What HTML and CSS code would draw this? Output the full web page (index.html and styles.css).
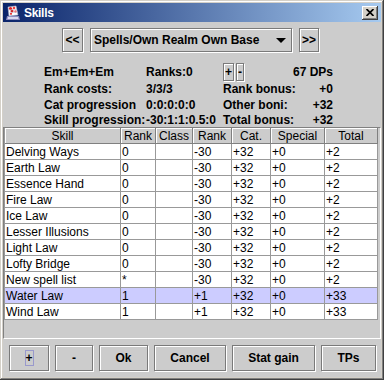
FILE: index.html
```html
<!DOCTYPE html>
<html>
<head>
<meta charset="utf-8">
<title>Skills</title>
<link rel="stylesheet" href="styles.css">
</head>
<body>
<div class="window">
  <div class="titlebar">
    <svg class="app-icon" width="16" height="16" viewBox="0 0 16 16">
      <path d="M2 11 L14 11 L15 15 L1 15 Z" fill="#8c8cc0"/>
      <path d="M3 12 L13 12 L13.5 14 L2.5 14 Z" fill="#d8d8f0"/>
      <path d="M3 2 L11 1 L13 10 L4 11 Z" fill="#ffffff" stroke="#b0b0c8" stroke-width="0.6"/>
      <circle cx="5.5" cy="3.5" r="1.6" fill="#e02020"/>
      <circle cx="9" cy="3" r="1.3" fill="#f04040"/>
      <circle cx="7" cy="6" r="1.5" fill="#d01818"/>
      <circle cx="10.5" cy="6.5" r="1.2" fill="#f06060"/>
      <circle cx="6" cy="8.8" r="1.1" fill="#e83030"/>
      <path d="M4 5 L12 4.5 M4.5 7.5 L12.5 7" stroke="#c0c0d8" stroke-width="0.6"/>
    </svg>
    <span class="title-text">Skills</span>
    <div class="close-btn">
      <svg width="8" height="7" viewBox="0 0 8 7"><path d="M0.5 0 L7.5 7 M7.5 0 L0.5 7" stroke="#000" stroke-width="1.7"/></svg>
    </div>
  </div>
  <div class="content">
    <div class="nav">
      <div class="btn nav-btn">&lt;&lt;</div>
      <div class="combo">
        <span>Spells/Own Realm Own Base</span>
        <svg width="10" height="5" viewBox="0 0 10 5"><path d="M0 0 L10 0 L5 5 Z" fill="#000"/></svg>
      </div>
      <div class="btn nav-btn nav-btn-r">&gt;&gt;</div>
    </div>
    <div class="info">
      <div class="cell">Em+Em+Em</div>
      <div class="cell">Ranks:0</div>
      <div class="cell span2">
        <div class="mini">
          <div class="btn mini-plus">+</div>
          <div class="btn mini-minus">-</div>
        </div>
        <span>67 DPs</span>
      </div>
      <div class="cell">Rank costs:</div>
      <div class="cell">3/3/3</div>
      <div class="cell">Rank bonus:</div>
      <div class="cell val">+0</div>
      <div class="cell">Cat progression</div>
      <div class="cell">0:0:0:0:0</div>
      <div class="cell">Other boni:</div>
      <div class="cell val">+32</div>
      <div class="cell">Skill progression:</div>
      <div class="cell">-30:1:1:0.5:0</div>
      <div class="cell">Total bonus:</div>
      <div class="cell val">+32</div>
    </div>
    <div class="pane">
      <div class="table">
        <div class="thead">
          <div class="th">Skill</div><div class="th">Rank</div><div class="th">Class</div><div class="th">Rank</div><div class="th">Cat.</div><div class="th">Special</div><div class="th">Total</div>
        </div>
        <div class="tr"><div class="td">Delving Ways</div><div class="td">0</div><div class="td"></div><div class="td">-30</div><div class="td">+32</div><div class="td">+0</div><div class="td">+2</div></div>
        <div class="tr"><div class="td">Earth Law</div><div class="td">0</div><div class="td"></div><div class="td">-30</div><div class="td">+32</div><div class="td">+0</div><div class="td">+2</div></div>
        <div class="tr"><div class="td">Essence Hand</div><div class="td">0</div><div class="td"></div><div class="td">-30</div><div class="td">+32</div><div class="td">+0</div><div class="td">+2</div></div>
        <div class="tr"><div class="td">Fire Law</div><div class="td">0</div><div class="td"></div><div class="td">-30</div><div class="td">+32</div><div class="td">+0</div><div class="td">+2</div></div>
        <div class="tr"><div class="td">Ice Law</div><div class="td">0</div><div class="td"></div><div class="td">-30</div><div class="td">+32</div><div class="td">+0</div><div class="td">+2</div></div>
        <div class="tr"><div class="td">Lesser Illusions</div><div class="td">0</div><div class="td"></div><div class="td">-30</div><div class="td">+32</div><div class="td">+0</div><div class="td">+2</div></div>
        <div class="tr"><div class="td">Light Law</div><div class="td">0</div><div class="td"></div><div class="td">-30</div><div class="td">+32</div><div class="td">+0</div><div class="td">+2</div></div>
        <div class="tr"><div class="td">Lofty Bridge</div><div class="td">0</div><div class="td"></div><div class="td">-30</div><div class="td">+32</div><div class="td">+0</div><div class="td">+2</div></div>
        <div class="tr"><div class="td">New spell list</div><div class="td">*</div><div class="td"></div><div class="td">-30</div><div class="td">+32</div><div class="td">+0</div><div class="td">+2</div></div>
        <div class="tr sel"><div class="td">Water Law</div><div class="td">1</div><div class="td"></div><div class="td">+1</div><div class="td">+32</div><div class="td">+0</div><div class="td">+33</div></div>
        <div class="tr"><div class="td">Wind Law</div><div class="td">1</div><div class="td"></div><div class="td">+1</div><div class="td">+32</div><div class="td">+0</div><div class="td">+33</div></div>
      </div>
    </div>
    <div class="actions">
      <div class="btn act w-plus"><span class="focus">+</span></div>
      <div class="btn act w-minus">-</div>
      <div class="btn act w-ok">Ok</div>
      <div class="btn act w-cancel">Cancel</div>
      <div class="btn act w-stat">Stat gain</div>
      <div class="btn act w-tps">TPs</div>
    </div>
  </div>
</div>
</body>
</html>
```

FILE: styles.css
```css
* { box-sizing: border-box; }
html, body { margin: 0; padding: 0; }
body {
  width: 384px;
  height: 380px;
  overflow: hidden;
  font-family: "Liberation Sans", Arial, sans-serif;
  font-size: 12px;
  color: #000;
  background: #cccccc;
}
.window {
  width: 384px;
  height: 380px;
  padding: 3px;
  background: #d4d0c8;
  box-shadow: inset -1px -1px 0 #404040, inset 1px 1px 0 #d4d0c8, inset -2px -2px 0 #808080, inset 2px 2px 0 #ffffff;
  display: flex;
  flex-direction: column;
}
.titlebar {
  height: 19px;
  flex: none;
  display: flex;
  align-items: center;
  padding-left: 2px;
  background: linear-gradient(to right, #0a246a, #a6caf0);
  color: #fff;
}
.app-icon { flex: none; display: block; }
.title-text {
  margin-left: 3px;
  font-weight: bold;
  font-size: 12px;
  letter-spacing: -0.3px;
  flex: 1;
}
.close-btn {
  width: 16px;
  height: 14px;
  margin-right: 3px;
  background: #d4d0c8;
  box-shadow: inset -1px -1px 0 #404040, inset 1px 1px 0 #ffffff, inset -2px -2px 0 #808080;
  display: flex;
  align-items: center;
  justify-content: center;
  padding: 0 1px 1px 0;
}
.close-btn svg { display: block; }
.content {
  flex: 1;
  background: #cccccc;
  display: flex;
  flex-direction: column;
}
.btn {
  background: #cccccc;
  border: 1px solid #7a7a7a;
  box-shadow: inset 1px 1px 0 #ffffff, 1px 1px 0 #ffffff;
  font-weight: bold;
  font-size: 12px;
  display: flex;
  align-items: center;
  justify-content: center;
  line-height: 16px;
}
.nav {
  margin-top: 6px;
  height: 24px;
  display: flex;
  padding-left: 59px;
  gap: 7px;
}
.nav-btn { width: 21px; height: 24px; }
.nav-btn-r { width: 20px; }
.combo {
  width: 202px;
  height: 24px;
  border: 1px solid #7a7a7a;
  box-shadow: inset 1px 1px 0 #ffffff, 1px 1px 0 #ffffff;
  display: flex;
  align-items: center;
  justify-content: space-between;
  padding: 0 5px 0 3px;
  font-weight: bold;
}
.combo svg { display: block; }
.info {
  margin-top: 10px;
  height: 65px;
  padding-left: 41px;
  display: grid;
  grid-template-columns: 102px 77px 77px 33px;
  grid-template-rows: 19px 16px 16px 14px;
  font-weight: bold;
  line-height: 16px;
  white-space: nowrap;
}
.cell { align-self: center; }
.val { text-align: right; }
.span2 {
  grid-column: 3 / 5;
  display: flex;
  justify-content: space-between;
  align-items: center;
}
.mini { display: flex; gap: 2px; }
.mini-plus { width: 11px; height: 18px; }
.mini-minus { width: 8px; height: 18px; }
.pane {
  height: 212px;
  flex: none;
  border: 1px solid;
  border-color: #808080 #ffffff #ffffff #808080;
  background: #cccccc;
}
.table {
  width: 374px;
  border-left: 1px solid #999999;
}
.thead, .tr {
  display: grid;
  grid-template-columns: 116px 35px 37px 39px 39px 54px 53px;
}
.th {
  height: 16px;
  border-right: 1px solid #808080;
  border-bottom: 1px solid #808080;
  box-shadow: inset 1px 1px 0 #ffffff;
  text-align: center;
  line-height: 17px;
  white-space: nowrap;
}
.td {
  height: 16px;
  border-right: 1px solid #999999;
  border-bottom: 1px solid #999999;
  background: #ffffff;
  padding-left: 1px;
  line-height: 17px;
  white-space: nowrap;
}
.tr.sel .td { background: #ccccff; }
.actions {
  margin-top: 6px;
  height: 26px;
  display: flex;
  gap: 6px;
  padding-left: 6px;
}
.act { height: 26px; }
.w-plus { width: 40px; }
.w-minus { width: 38px; }
.w-ok { width: 49px; }
.w-cancel { width: 72px; }
.w-stat { width: 83px; }
.w-tps { width: 55px; }
.focus {
  display: inline-block;
  border: 1px solid #9999cc;
  line-height: 14px;
  height: 16px;
  width: 9px;
  text-align: center;
}
```
